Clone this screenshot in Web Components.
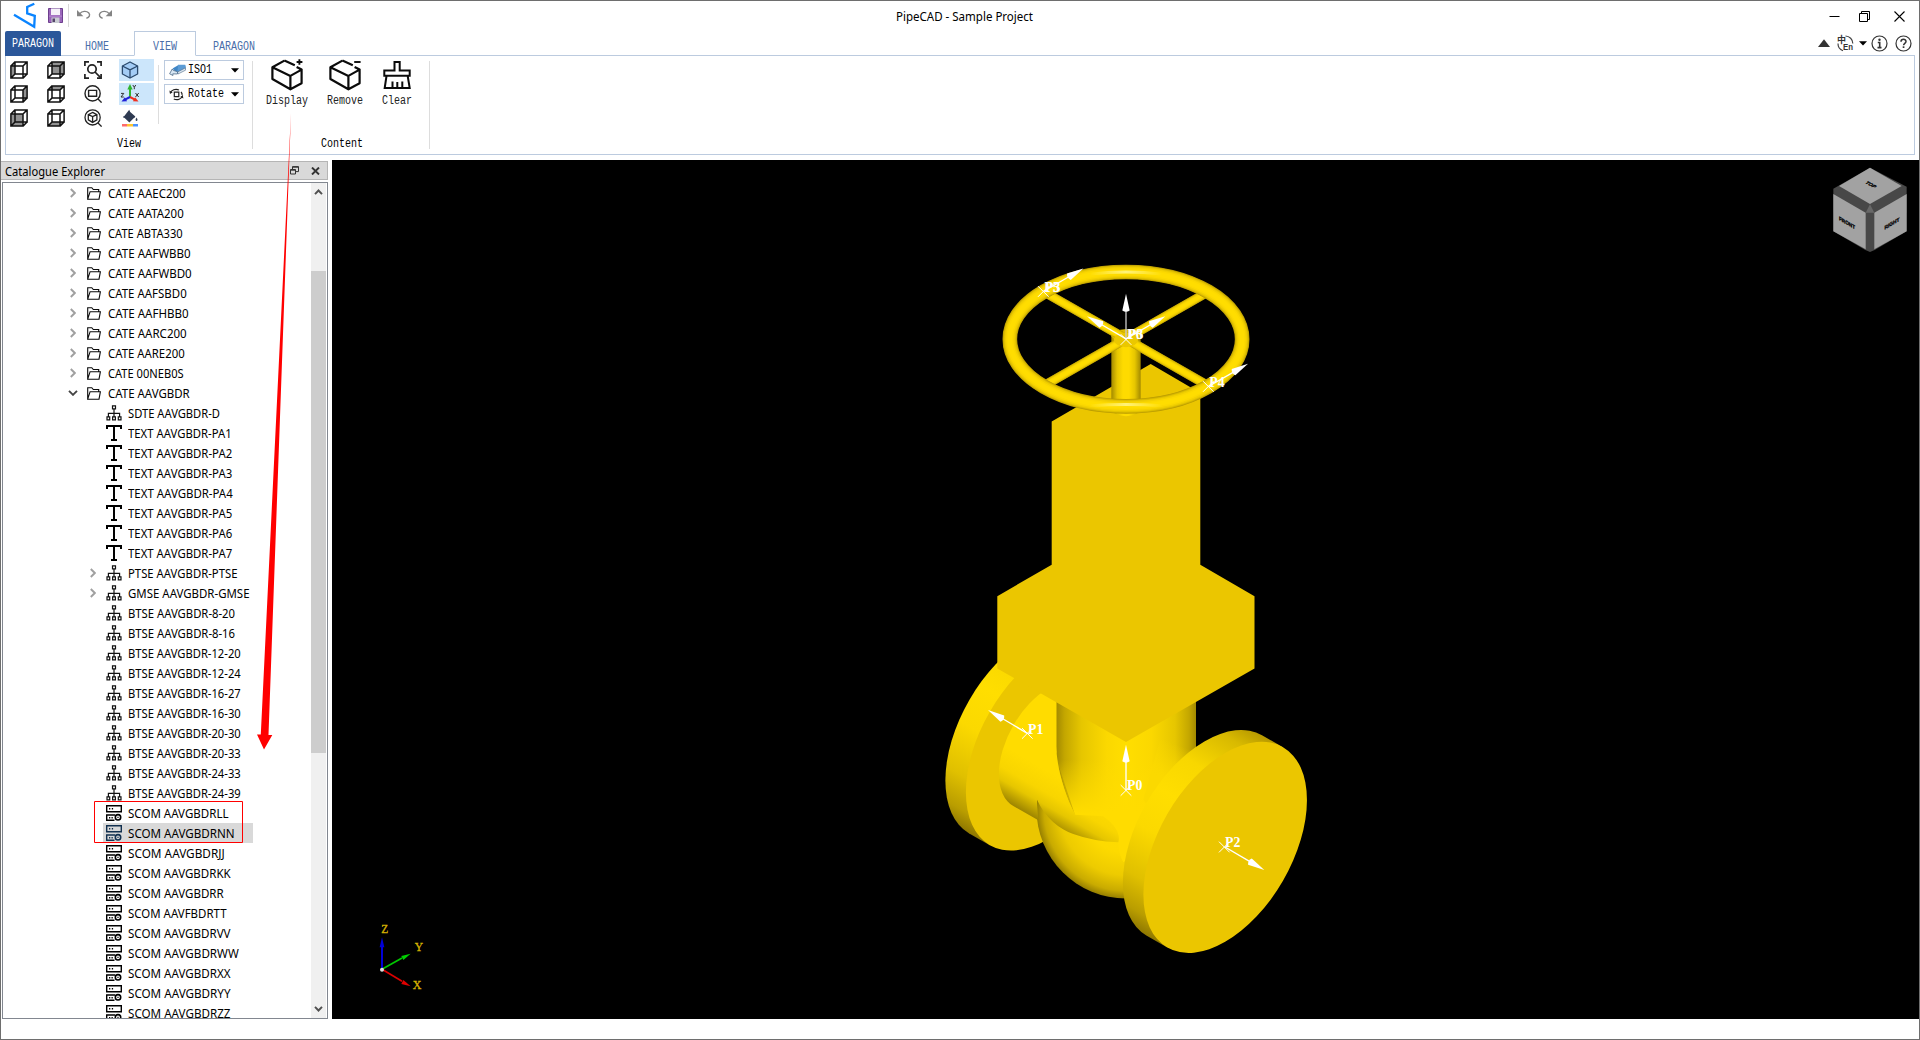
<!DOCTYPE html>
<html lang="en">
<head>
<meta charset="utf-8">
<title>PipeCAD - Sample Project</title>
<style>
html,body{margin:0;padding:0;background:#fff;overflow:hidden}
</style>
</head>
<body>
<pc-app>
  <pc-titlebar slot="title"><pc-text w="137">PipeCAD - Sample Project</pc-text></pc-titlebar>
  <pc-ribbon slot="ribbon"></pc-ribbon>
  <pc-explorer slot="dock"></pc-explorer>
  <pc-viewport slot="view"></pc-viewport>
  <pc-annotation slot="overlay"></pc-annotation>
</pc-app>
<script>
const BASE = '*{box-sizing:border-box}svg{display:block;flex:none}';
function define(name, css, html, init) {
  customElements.define(name, class extends HTMLElement {
    connectedCallback() {
      if (this.shadowRoot) return;
      const root = this.attachShadow({mode: 'open'});
      const body = typeof html === 'function' ? html(this) : html;
      root.innerHTML = `<style>${BASE}${css}</style>${body}`;
      if (init) init(this, root);
    }
  });
}

const cube = face => `<svg width="18" height="18" viewBox="0 0 18 18" fill="none" stroke="#111" stroke-width="1.5">
  ${face ? `<path d="${face}" fill="#929292" stroke="none"/>` : ''}
  <path d="M.9 5H13v12.1H.9zM5 .9h12.1V13H5zM.9 5 5 .9M13 5l4.1-4.1M.9 17.1 5 13M13 17.1l4.1-4.1" /></svg>`;
const box = sign => `<svg width="32" height="32" viewBox="0 0 32 32" fill="none" stroke="#0b0b0b" stroke-width="2.2" stroke-linejoin="round">
  <path d="M13.4 1.6 1.4 8.3V20l18 10.3 11.2-6.1V10.6M13.4 1.6l10.4 4.6M1.4 8.3l18 8.6 11.2-6.3-5-2.6M19.4 16.9v13.4"/>
  <path d="${sign}" stroke-width="1.9"/></svg>`;
const ICONS = {
  cubeLeft: cube('M1 5 5 1v12l-4 4z'),
  cubeRight: cube('M13 5l4-4v12l-4 4z'),
  cubeFront: cube('M1 5h12v12H1z'),
  cubeBack: cube('M5 1h12v12H5z'),
  cubeTop: cube('M1 5l4-4h12l-4 4z'),
  cubeBottom: cube('M1 17l4-4h12l-4 4z'),
  fit: `<svg width="18" height="18" viewBox="0 0 18 18" fill="none" stroke="#222" stroke-width="1.7"><path d="M.9 5V.9H5M13 .9h4.1V5M17.1 13v4.1H13M5 17.1H.9V13"/><circle cx="8" cy="8" r="4.2"/><path d="M11 11l5.6 5.6"/></svg>`,
  zoomRect: `<svg width="18" height="18" viewBox="0 0 18 18" fill="none" stroke="#222" stroke-width="1.4"><circle cx="8.6" cy="8.4" r="7.6"/><path d="M4.6 5.4h8v5.8h-8zM14 14l3.6 3.6"/></svg>`,
  zoomCube: `<svg width="18" height="18" viewBox="0 0 18 18" fill="none" stroke="#222" stroke-width="1.3"><circle cx="8.6" cy="8.4" r="7.6"/><path d="M8.6 3.4l4.3 2.2v5.2l-4.3 2.6-4.3-2.6V5.6zM4.3 5.6l4.3 2 4.3-2M8.6 7.6v5.8M14 14l3.6 3.6"/></svg>`,
  shaded: `<svg width="18" height="18" viewBox="0 0 18 18" fill="#a3ccf5" stroke="#2b4a6d" stroke-width="1.3" stroke-linejoin="round"><path d="M9 1l7.6 4v8L9 17l-7.6-4V5z"/><path d="M1.4 5L9 8.8 16.6 5M9 8.8V17" fill="none"/></svg>`,
  axes: `<svg width="20" height="20" viewBox="0 0 20 20"><path d="M10 13V4" stroke="#2fb52f" stroke-width="2"/><path d="M7.3 5.5 10 0l2.7 5.5z" fill="#2fb52f"/><path d="M10 13l5 2.6" stroke="#f03020" stroke-width="2"/><path d="M18.5 17.5l-5.6-.2 2.2-4z" fill="#f03020"/><path d="M10 13l-5 2.6" stroke="#2020d8" stroke-width="2"/><path d="M1.5 17.5l5.6-.2-2.2-4z" fill="#2020d8"/><path d="M12.8 1l1.5 2.2L15.8 1M14.3 3.2v2M15.5 9l3.2 4M18.7 9l-3.2 4M1 9.4h2.8L1 13h2.8" stroke="#333" fill="none" stroke-width="1"/></svg>`,
  paint: `<svg width="18" height="18" viewBox="0 0 18 18"><path d="M8.2.8l1 2.2 5.2 4.6-6 5.8L2.6 8z" fill="#2f3b52"/><path d="M2 8h12" stroke="#2f3b52"/><path d="M15.5 8.5c1.6 2.3 1 3.5 0 3.5s-1.4-1.2 0-3.5z" fill="#2f3b52"/><path d="M1 15h5v2.5H1z" fill="#ff6b6b"/><path d="M6 15h6v2.5H6z" fill="#ffc62e"/><path d="M12 15h5v2.5h-5z" fill="#4b93ff"/></svg>`,
  iso: `<svg width="17" height="12" viewBox="0 0 17 12"><path d="M3.500 4.500 9.500 1 16.500 1.5v3L8 9.500z" fill="#3f86c6"/><path d="M9 .8h7.2l.3 3L8.500 8" fill="#5b9bd5"/><path d="M8.500 8 16.500 3.800v2.400L9 10z" fill="#dbe6f0" stroke="#4d6a86" stroke-width=".6"/><path d="M.6 9.800 3.200 5l1 1.300 4.400 1.500-.2 2.200-4.600-.2.200 1.700z" fill="#d7e6f3" stroke="#4d6a86" stroke-width=".8"/></svg>`,
  rotate: `<svg width="15" height="13" viewBox="0 0 15 13" fill="none" stroke="#222" stroke-width="1.2"><path d="M5.3 4.2h4.500v4.500H5.300z"/><path d="M1.2 5.2C2.3 2 6.5.4 10 2M13.6 7.7c-1 3.3-5.300 5-8.800 3.300M12 4c1 1 1.300 2 1 3"/><path d="M.4 2.500l.6 3.300 2.700-1.400zM14.400 10.600l-.6-3.300-2.600 1.600z" fill="#222" stroke="none"/></svg>`,
  down: `<svg width="8" height="5" viewBox="0 0 8 5"><path d="M0 .3h8L4 4.500z" fill="#000"/></svg>`,
  display: box('M28.4.2v5.600M25.6 3h5.800'),
  remove: box('M25.2 3h6.400'),
  clear: `<svg width="28" height="28" viewBox="0 0 28 28" fill="none" stroke="#0b0b0b" stroke-width="2"><path d="M11.500 1h5.200v8.500h10v5.300H1.300V9.500h10.200zM3.500 15 1.700 27h25l-2-12M9.500 20.500V27M14.300 21v6M19.300 20.500V27"/></svg>`,
  logo: `<svg width="24" height="27" viewBox="0 0 24 27" fill="none" stroke="#0a84ff" stroke-width="2.3"><path d="M21.300 1.700 14.200 5v6.400l7.600 2.400-.6 11L1 12.800"/></svg>`,
  save: `<svg width="15" height="15" viewBox="0 0 15 15"><path d="M.5.5h14v14H.5z" fill="#9a66ba" stroke="#6d3f8e"/><path d="M3 .5h9V7H3z" fill="#f5f1f8"/><path d="M1 7.600h13v1H1z" fill="#b98bd2"/><path d="M3.500 9.500h8V15h-8z" fill="#c9ccd2"/><path d="M4.500 10.500H7V14H4.500z" fill="#54456a"/></svg>`,
  undo: `<svg width="14" height="9" viewBox="0 0 14 9"><path d="M0 0v6.300h6.400z" fill="#848484"/><path d="M2.800 3.600C5 1 9.500.6 11.600 2.800s.6 4.800-2.200 5.400" fill="none" stroke="#848484" stroke-width="1.4"/></svg>`,
  redo: `<svg width="14" height="9" viewBox="0 0 14 9"><path d="M14 0v6.300H7.600z" fill="#848484"/><path d="M11.200 3.600C9 1 4.500.6 2.400 2.800s-.6 4.800 2.200 5.400" fill="none" stroke="#848484" stroke-width="1.4"/></svg>`,
  min: `<svg width="11" height="11" viewBox="0 0 11 11"><path d="M.5 5.500h10" stroke="#000"/></svg>`,
  restore: `<svg width="11" height="11" viewBox="0 0 11 11" fill="none" stroke="#000"><path d="M.5 2.500h8v8h-8zM2.500 2.500v-2h8v8h-2"/></svg>`,
  close: `<svg width="11" height="11" viewBox="0 0 11 11"><path d="M.5.5l10 10M10.500.5l-10 10" stroke="#000" stroke-width="1.1"/></svg>`,
  collapse: `<svg width="12" height="8" viewBox="0 0 12 8"><path d="M0 8h12L6 .3z" fill="#333"/></svg>`,
  lang: `<svg width="17" height="17" viewBox="0 0 17 17" fill="none" stroke="#444" overflow="visible"><path d="M8.500 1a7.500 7.500 0 0 1 7.300 7.500M6 15.700A7.500 7.500 0 0 1 1 8.500" stroke-width="1.200"/><text x="0" y="7.500" font-family="Noto Sans CJK SC,sans-serif" font-size="9" font-weight="bold" fill="#333" stroke="none">中</text><text x="6" y="15.300" font-family="Liberation Sans" font-size="9" font-weight="bold" textLength="10" lengthAdjust="spacingAndGlyphs" fill="#333" stroke="none">En</text></svg>`,
  info: `<svg width="17" height="17" viewBox="0 0 17 17" fill="none" stroke="#333" stroke-width="1.2"><circle cx="8.500" cy="8.500" r="7.500"/><circle cx="8.500" cy="4.700" r="1.200" fill="#333" stroke="none"/><path d="M6.800 7.500h1.900v4.800M6.500 12.600h4" stroke-width="1.600"/></svg>`,
  help: `<svg width="17" height="17" viewBox="0 0 17 17" fill="none" stroke="#333" stroke-width="1.2"><circle cx="8.500" cy="8.500" r="7.500"/><path d="M6 6.700C6 3.500 11 3.500 11 6.500c0 1.800-2.400 1.900-2.400 3.700" stroke-width="1.500"/><path d="M7.700 11.300h1.700V13H7.700z" fill="#333" stroke="none"/></svg>`,
  dockFloat: `<svg width="9" height="9" viewBox="0 0 9 9" fill="none" stroke="#333" stroke-width="1"><path d="M.5 3.500h5v4.500h-5zM.5 4.200h5M2.500 3V.6h6v5H6M2.500 1.200h6"/></svg>`,
  dockClose: `<svg width="9" height="8" viewBox="0 0 9 8"><path d="M1 .5l7 7M8 .5l-7 7" stroke="#333" stroke-width="1.9"/></svg>`,
  folder: `<svg width="14" height="13" viewBox="0 0 14 13" fill="none" stroke="#0a0a0a" stroke-width="1.1"><path d="M.7 12.200V.7h4.100l1.500 1.800h5.400v2.200M.7 12.200l2.400-7.500h10.300l-1.400 7.500z"/></svg>`,
  tree: `<svg width="16" height="16" viewBox="0 0 16 16" fill="none" stroke="#111" stroke-width="1.2"><path d="M6.500.8h3v3h-3zM8 4v7.500M2.400 11.500V8.300h11.200v3.200M1 11.800h2.700v3H1zM6.600 11.800h2.800v3H6.600zM12.300 11.800H15v3h-2.700z"/></svg>`,
  text: `<svg width="16" height="16" viewBox="0 0 16 16" fill="none" stroke="#000" stroke-width="2"><path d="M1 4V1h14v3M8 1v14M5 15h6"/></svg>`,
  scom: `<svg width="16" height="16" viewBox="0 0 16 16" fill="none" stroke="currentColor" stroke-width="1.4"><path d="M.7.7h14.600v6H.7zM8.500 15.300H.7V10h8.500"/><path d="M3 3.700h1.300M5.800 3.700h1.300M3 12.700h1.300M5.500 12.700h1.300" stroke-width="1.400"/><circle cx="12" cy="12.300" r="2.700" stroke-width="1.600"/><path d="M11.400 12.300h1.200" stroke-width="1.200"/></svg>`,
  chevR: `<svg width="6" height="10" viewBox="0 0 6 10"><path d="M.8 1l4 4-4 4" fill="none" stroke="#a0a0a0" stroke-width="1.900"/></svg>`,
  chevD: `<svg width="10" height="6" viewBox="0 0 10 6"><path d="M1 .8l4 4 4-4" fill="none" stroke="#444" stroke-width="1.900"/></svg>`,
  sbUp: `<svg width="9" height="6" viewBox="0 0 9 6"><path d="M1 5.200l3.500-3.700L8 5.200" fill="none" stroke="#505050" stroke-width="1.900"/></svg>`,
  sbDown: `<svg width="9" height="6" viewBox="0 0 9 6"><path d="M1 .8l3.500 3.700L8 .8" fill="none" stroke="#505050" stroke-width="1.900"/></svg>`
};
define('pc-icon', ':host{display:block;flex:none}', el => ICONS[el.getAttribute('name')]);

define('pc-app', `
  :host{display:flex;flex-direction:column;position:relative;width:1920px;height:1040px;background:#fff;box-sizing:border-box;
    border:1px solid #6e6e6e;overflow:hidden;font:12px "Noto Sans","Open Sans",sans-serif;color:#000}
  main{display:flex;height:859px;gap:3px}
  `, `<slot name="title"></slot><slot name="ribbon"></slot>
  <main><slot name="dock"></slot><slot name="view"></slot></main><slot name="overlay"></slot>`);

define('pc-titlebar', `
  :host{display:grid;grid-template-columns:1fr auto 1fr;height:30px;align-items:start}
  .l{display:flex;align-items:flex-start;padding-left:12px}
  .l pc-icon:nth-child(1){margin-top:1px}
  .l pc-icon:nth-child(2){margin:7px 0 0 11px}
  .l i{width:1px;height:23px;margin:3px 8px 0 5px;background:#d8d8d8}
  .l pc-icon:nth-child(4){margin-top:9px}
  .l pc-icon:nth-child(5){margin:9px 0 0 7px}
  .c{padding:7px 0 0 9px;line-height:17px}
  .r{display:flex;justify-content:flex-end;padding:10px 14px 0 0}
  .r pc-icon+pc-icon{margin-left:19px}.r pc-icon:last-child{margin-left:24px}
  `, `<div class="l"><pc-icon name="logo"></pc-icon><pc-icon name="save"></pc-icon><i></i><pc-icon name="undo"></pc-icon><pc-icon name="redo"></pc-icon></div>
  <div class="c"><slot></slot></div>
  <div class="r"><pc-icon name="min"></pc-icon><pc-icon name="restore"></pc-icon><pc-icon name="close"></pc-icon></div>`);

define('pc-combo', `
  :host{display:flex;align-items:center;width:80px;height:20px;border:1px solid #bccbdf;padding:0 4px;background:#fff;box-sizing:border-box}
  .i{width:19px}.t{flex:1}`,
  el => `<div class="i"><pc-icon name="${el.getAttribute('icon')}"></pc-icon></div><div class="t"><slot></slot></div><pc-icon name="down"></pc-icon>`);

define('pc-bigbutton', `
  :host{display:flex;flex-direction:column;align-items:center;color:#222}
  .i{height:32px;display:flex;align-items:center}.t{line-height:14px;margin-top:3px}`,
  el => `<div class="i"><pc-icon name="${el.getAttribute('icon')}"></pc-icon></div><div class="t"><slot></slot></div>`);

define('pc-ribbon', `
  :host{display:flex;flex-direction:column;height:129px;padding:0 4px 0 4px;font:12px "Liberation Mono",monospace;box-sizing:border-box}
  nav{display:flex;height:25px;color:#4a6ea9}
  nav>div{display:flex;align-items:flex-end;justify-content:center;padding-bottom:1px;border-bottom:1px solid #bccbdf;line-height:14px}
  .file{width:56px;background:#2b579a;color:#fff;padding-bottom:4px!important;border-color:#2b579a!important;border-radius:2px 2px 0 0}
  .home{width:73px;padding-right:2px}
  .view{width:62px;border:1px solid #bccbdf;border-bottom-color:#fff!important}
  .par{width:76px}
  .rest{flex:1;justify-content:flex-end!important;gap:7px;padding-right:3px;align-items:center!important;padding-top:1px}
  .panel{display:flex;height:99px;border:1px solid #bccbdf;border-top:0}
  .g1{display:flex;flex-direction:column;width:247px}
  .row{display:flex;height:75px;padding:3px 0 0 4px}
  .grid{display:grid;grid-template-columns:37px 37px 35px 35px;grid-template-rows:repeat(3,24px);align-items:start}
  .grid>div{height:22px;display:flex;align-items:center}
  .on{background:#cce6fb}.grid>div:nth-child(4n){padding-left:2px}
  .grid>.ax{padding-left:1px!important}
  .vs{width:1px;height:59px;margin:6px 5px 0 4px;background:#ddd}
  .combos{display:flex;flex-direction:column;gap:4px;padding-top:1px}
  .cap{display:flex;line-height:14px;padding-top:6px}
  .sep{width:1px;height:88px;margin-top:5px;background:#ddd}
  .g2{width:176px;display:flex;flex-direction:column}
  .big{display:flex;height:75px;padding:3px 0 0 13px;gap:19px}`,
  `<nav><div class="file"><pc-text w="42">PARAGON</pc-text></div><div class="home"><pc-text w="24">HOME</pc-text></div>
   <div class="view"><pc-text w="24">VIEW</pc-text></div><div class="par"><pc-text w="42">PARAGON</pc-text></div>
   <div class="rest"><pc-icon name="collapse"></pc-icon><pc-icon name="lang"></pc-icon><pc-icon name="down" style="margin:0 -2px"></pc-icon><pc-icon name="info" style="margin-left:-1px"></pc-icon><pc-icon name="help"></pc-icon></div></nav>
   <div class="panel"><div class="g1"><div class="row"><div class="grid">
     <div><pc-icon name="cubeLeft"></pc-icon></div><div><pc-icon name="cubeBack"></pc-icon></div><div><pc-icon name="fit"></pc-icon></div><div class="on"><pc-icon name="shaded"></pc-icon></div>
     <div><pc-icon name="cubeRight"></pc-icon></div><div><pc-icon name="cubeTop"></pc-icon></div><div><pc-icon name="zoomRect"></pc-icon></div><div class="on ax"><pc-icon name="axes"></pc-icon></div>
     <div><pc-icon name="cubeFront"></pc-icon></div><div><pc-icon name="cubeBottom"></pc-icon></div><div><pc-icon name="zoomCube"></pc-icon></div><div><pc-icon name="paint"></pc-icon></div>
     </div><div class="vs"></div><div class="combos"><pc-combo icon="iso"><pc-text w="24">ISO1</pc-text></pc-combo><pc-combo icon="rotate"><pc-text w="36">Rotate</pc-text></pc-combo></div></div>
     <div class="cap" style="padding-left:111px"><pc-text w="24">View</pc-text></div></div>
   <div class="sep" style="margin-left:-1px"></div>
   <div class="g2"><div class="big"><pc-bigbutton icon="display"><pc-text w="42">Display</pc-text></pc-bigbutton><pc-bigbutton icon="remove"><pc-text w="36">Remove</pc-text></pc-bigbutton><pc-bigbutton icon="clear"><pc-text w="30">Clear</pc-text></pc-bigbutton></div>
     <div class="cap" style="padding-left:68px"><pc-text w="42">Content</pc-text></div></div>
   <div class="sep"></div></div>`);

const ROWS = [
  ['CATE AAEC200',77.7],['CATE AATA200',75.7],['CATE ABTA330',74.7],['CATE AAFWBB0',82.7],['CATE AAFWBD0',83.7],
  ['CATE AAFSBD0',78.7],['CATE AAFHBB0',80.7],['CATE AARC200',78.7],['CATE AARE200',76.7],['CATE 00NEB0S',75.7],
  ['CATE AAVGBDR',81.7],['SDTE AAVGBDR-D',92],
  ['TEXT AAVGBDR-PA1',103.7],['TEXT AAVGBDR-PA2',104.2],['TEXT AAVGBDR-PA3',104.2],['TEXT AAVGBDR-PA4',104.7],['TEXT AAVGBDR-PA5',104.2],['TEXT AAVGBDR-PA6',104.2],['TEXT AAVGBDR-PA7',104.2],
  ['PTSE AAVGBDR-PTSE',109.5],['GMSE AAVGBDR-GMSE',121.5],
  ['BTSE AAVGBDR-8-20',107],['BTSE AAVGBDR-8-16',107],['BTSE AAVGBDR-12-20',112.7],['BTSE AAVGBDR-12-24',112.7],['BTSE AAVGBDR-16-27',112.7],
  ['BTSE AAVGBDR-16-30',112.7],['BTSE AAVGBDR-20-30',112.7],['BTSE AAVGBDR-20-33',112.7],['BTSE AAVGBDR-24-33',112.7],['BTSE AAVGBDR-24-39',112.7],
  ['SCOM AAVGBDRLL',100.5],['SCOM AAVGBDRNN',106.7],['SCOM AAVGBDRJJ',96.7],['SCOM AAVGBDRKK',102.7],['SCOM AAVGBDRR',95.7],
  ['SCOM AAVFBDRTT',98.5],['SCOM AAVGBDRVV',102.5],['SCOM AAVGBDRWW',110.7],['SCOM AAVGBDRXX',102.5],['SCOM AAVGBDRYY',102.5],['SCOM AAVGBDRZZ',102.5]];
const KIND = {CATE:'folder', TEXT:'text', SCOM:'scom'};

define('pc-row', `
  :host{display:flex;height:20px;flex:none;padding-left:calc(60px + var(--lv,0)*20px)}
  .ch{width:19px;margin-right:1px;display:flex;align-items:center;justify-content:center}
  .it{display:flex;align-items:center;height:20px;padding-right:18px}
  :host([sel]) .it{background:#d9d9d9;--ic:#12304f}
  .ic{width:22px;display:flex;justify-content:center;color:var(--ic,#000)}
  .tx{padding:1px 0 0 3.3px;line-height:19px;height:20px}`,
  el => `<div class="ch">${el.getAttribute('chev') ? `<pc-icon name="${el.getAttribute('chev')}"></pc-icon>` : ''}</div>
  <div class="it"><div class="ic"><pc-icon name="${el.getAttribute('icon')}"></pc-icon></div><div class="tx"><slot></slot></div></div>`);

define('pc-explorer', `
  :host{display:flex;flex-direction:column;width:327px;height:859px;padding:1px 0 0 0;margin-right:1px;box-sizing:border-box}
  header{display:flex;height:19px;align-items:center;background:#d9d9d9;border:1px solid #b5b5b5;border-left:0;padding:0 7px 0 4px;line-height:17px}
  header pc-text{padding-top:1px}
  header pc-icon+pc-icon{margin-left:12px}
  .box{display:flex;margin:2px 0 0 1px;height:837px;border:1px solid #828790}
  .list{flex:1;overflow:hidden;display:flex;flex-direction:column}
  .sb{width:15px;margin-right:1px;display:flex;flex-direction:column;align-items:center;background:#f0f0f0;padding:6px 0}
  .thumb{width:15px;height:482px;margin-top:76px;background:#cdcdcd}
  .sp{flex:1}`,
  () => `<header><pc-text w="100">Catalogue Explorer</pc-text><span style="flex:1"></span><pc-icon name="dockFloat"></pc-icon><pc-icon name="dockClose"></pc-icon></header>
  <div class="box"><div class="list">${ROWS.map(([t, w], i) => {
    const k = t.slice(0, 4), lv = i > 10 ? 1 : 0;
    const chev = i < 10 || i === 19 || i === 20 ? 'chevR' : i === 10 ? 'chevD' : '';
    return `<pc-row style="--lv:${lv}" icon="${KIND[k] || 'tree'}" chev="${chev}" ${i === 32 ? 'sel' : ''}><pc-text w="${w}">${t}</pc-text></pc-row>`;
  }).join('')}</div><div class="sb"><pc-icon name="sbUp"></pc-icon><div class="thumb"></div><div class="sp"></div><pc-icon name="sbDown"></pc-icon></div></div>`);

/* Direction arrow with cone head; units are thirds of a pixel */
function arrow(x, y, tx, ty, line = '#fff') {
  const L = Math.hypot(tx - x, ty - y), ux = (tx - x) / L, uy = (ty - y) / L;
  const bx = tx - ux * 50, by = ty - uy * 50, h = 11;
  return `<path d="M${x} ${y}L${bx} ${by}" stroke="${line}" stroke-width="4"/>
  <path d="M${tx} ${ty}L${bx - uy * h} ${by + ux * h}Q${bx - ux * 8} ${by - uy * 8} ${bx + uy * h} ${by - ux * h}z" fill="#fff"/>`;
}
const cross = (x, y) => `<path d="M${x - 16} ${y - 16}l32 32M${x + 16} ${y - 16}l-32 32" stroke="#fff" stroke-width="3"/>`;
const label = (x, y, t) => `<text x="${x}" y="${y}" font-family="Liberation Serif" font-weight="bold" font-size="46" fill="#fff" textLength="46" lengthAdjust="spacingAndGlyphs">${t}</text>`;
const disc = (cx, cy, id) => `
  <path fill="url(#${id})" d="M${cx + 173.5} ${cy - 300.5}L${cx + 110.5} ${cy - 336.5}A347 200 -60 0 0 ${cx - 236.5} ${cy + 264.5}L${cx - 173.5} ${cy + 300.5}z"/>
  <ellipse cx="${cx}" cy="${cy}" rx="347" ry="200.3" transform="rotate(-60 ${cx} ${cy})" fill="#ebc600"/>`;
const rimGrad = (id, cx, cy) => `<linearGradient id="${id}" gradientUnits="userSpaceOnUse" x1="${cx + 173}" y1="${cy - 300}" x2="${cx - 173}" y2="${cy + 300}">
  <stop offset="0" stop-color="#b89a00"/><stop offset=".08" stop-color="#d8b900"/><stop offset=".25" stop-color="#f8d700"/><stop offset=".42" stop-color="#ffde00"/><stop offset=".6" stop-color="#fbd900"/><stop offset=".8" stop-color="#e0c000"/><stop offset=".93" stop-color="#b99d00"/><stop offset="1" stop-color="#8f7800"/></linearGradient>`;

function tube(w) {
  const steps = [['#b79900', 1], ['#cfb000', .93], ['#e3c300', .82], ['#f2d000', .68], ['#fcd900', .5], ['#ffdd00', .3]];
  return steps.map(([c, k]) => [c, w * k]);
}
const spokes = tube(28).map(([c, w]) => `<path d="M195 158 681 436M681 158 195 436" stroke="${c}" stroke-width="${w}"/>`).join('');
const ring = tube(44).map(([c, w]) => `<ellipse cx="438" cy="298" rx="348.500" ry="201.500" stroke="${c}" stroke-width="${w}"/>`).join('');

define('pc-viewport', ':host{display:block;flex:1;height:859px;background:#000;overflow:hidden}', () => `
<svg width="1587" height="859" viewBox="332 160 1587 859">
<defs>
 ${rimGrad('rimL', 353, 316)}${rimGrad('rimR', 885.5, 623)}
 <linearGradient id="neck" gradientUnits="userSpaceOnUse" x1="460" y1="135" x2="250" y2="499">
  <stop offset="0" stop-color="#d0b000"/><stop offset=".2" stop-color="#ffdc00"/><stop offset=".66" stop-color="#ffdc00"/><stop offset=".8" stop-color="#f8d500"/><stop offset=".88" stop-color="#e6c600"/><stop offset="1" stop-color="#9c8400"/></linearGradient>
 <linearGradient id="vert" gradientUnits="userSpaceOnUse" x1="379" y1="0" x2="798" y2="0">
  <stop offset="0" stop-color="#a38a00"/><stop offset=".06" stop-color="#c4a700"/><stop offset=".18" stop-color="#e6c600"/><stop offset=".36" stop-color="#fbd800"/><stop offset=".5" stop-color="#ffde00"/><stop offset=".68" stop-color="#fbd800"/><stop offset=".85" stop-color="#e6c600"/><stop offset=".95" stop-color="#c4a700"/><stop offset="1" stop-color="#a38a00"/></linearGradient>
 <linearGradient id="blend" gradientUnits="userSpaceOnUse" x1="560" y1="360" x2="560" y2="520"><stop offset="0" stop-color="#ffdc00" stop-opacity="0"/><stop offset="1" stop-color="#ffdc00"/></linearGradient>
 <linearGradient id="blendR" gradientUnits="userSpaceOnUse" x1="730" y1="310" x2="690" y2="410"><stop offset="0" stop-color="#fbd900" stop-opacity="0"/><stop offset="1" stop-color="#fbd900"/></linearGradient>
 <radialGradient id="ball" gradientUnits="userSpaceOnUse" cx="588" cy="508" r="268" fx="590" fy="500">
  <stop offset="0" stop-color="#ffde00"/><stop offset=".5" stop-color="#fdda00"/><stop offset=".75" stop-color="#edcb00"/><stop offset=".92" stop-color="#c9ab00"/><stop offset="1" stop-color="#978000"/></radialGradient>
 <linearGradient id="stem" gradientUnits="userSpaceOnUse" x1="394" y1="0" x2="482" y2="0">
  <stop offset="0" stop-color="#a38a00"/><stop offset=".2" stop-color="#e6c600"/><stop offset=".4" stop-color="#fedb00"/><stop offset=".6" stop-color="#fedb00"/><stop offset=".8" stop-color="#e6c600"/><stop offset="1" stop-color="#a38a00"/></linearGradient>
 <linearGradient id="shine" gradientUnits="userSpaceOnUse" x1="330" y1="0" x2="546" y2="0"><stop offset="0" stop-color="#fff27a" stop-opacity="0"/><stop offset=".5" stop-color="#fff27a"/><stop offset="1" stop-color="#fff27a" stop-opacity="0"/></linearGradient>
</defs>
<g transform="translate(930 639.700) scale(.33333)">
 ${disc(353, 316, 'rimL')}
 <circle cx="588" cy="508" r="268.500" fill="url(#ball)"/>
 <path d="M379 150V320C380 380 400 455 435 525L565 608Q566 640 580 668L700 560 798 400V150z" fill="url(#vert)"/>
 <path d="M380 360 435 525 565 608Q566 640 580 668L700 560V360z" fill="url(#blend)"/>
 <path d="M798 300V420L700 560 640 480 690 300z" fill="url(#blendR)"/>
 <path d="M460 135A210 121 -60 0 0 250 499L325 542 320 478C345 535 390 570 430 583Q490 605 565 608Q575 570 520 530L435 525C400 455 380 380 379 320V135z" fill="url(#neck)"/>
 ${disc(885.5, 623, 'rimR')}
</g>
<path d="M1051.700 421.500 1150.700 364.100 1200.300 393V564.700L1254.500 596.200V668.500L1126 742.100 997.300 668.500V596.200L1051.700 564.700z" fill="#ebc600"/>
<g transform="translate(930 639.700) scale(.33333)">
 ${arrow(292, 281, 174, 211)}${cross(292, 281)}${label(294, 282, 'P1')}
 ${arrow(588, 452, 588, 315)}${cross(588, 452)}${label(591, 452, 'P0')}
 ${arrow(885, 622, 1003, 691)}${cross(883, 622)}${label(885, 623, 'P2')}
</g>
<g transform="translate(980 239.800) scale(.33333)" fill="none">
 <path d="M394 290A44 22 0 0 1 482 290V505A44 24 0 0 1 394 505z" fill="url(#stem)"/>
 <path d="M394 290A44 20 0 0 1 482 290L470 300H406z" fill="#e0bd00"/>
 ${spokes}
 <ellipse cx="438" cy="300" rx="36" ry="22" fill="#ebc800"/>
 ${ring}
 <path d="M330 103Q438 90 546 103M330 498Q438 490 546 498" stroke="url(#shine)" stroke-width="9"/>
 ${arrow(438, 297, 438, 162, '#c8c8c8')}${arrow(438, 297, 321, 229)}${arrow(438, 297, 556, 229)}${cross(438, 299)}
 ${label(442, 299, 'P6')}${label(444, 299, 'P3')}
 ${arrow(190, 155, 310, 86)}${cross(190, 155)}${label(193, 156, 'P5')}${label(195, 156, 'P3')}
 ${arrow(685, 440, 804, 372)}${cross(685, 440)}${label(688, 441, 'P4')}
</g>
<g transform="translate(360 900) scale(.33333)">
 <path d="M66 208V138" stroke="#0000d8" stroke-width="6"/><path d="M66 112l-7 30h14z" fill="#0000d8"/>
 <path d="M66 208l60-34" stroke="#00c800" stroke-width="5"/><path d="M152 161l-28 7 6 12z" fill="#00d000"/>
 <path d="M66 208l60 36" stroke="#dc0000" stroke-width="5"/><path d="M152 259l-28-7 6-12z" fill="#e00000"/>
 <circle cx="66" cy="209" r="6" fill="#ddd"/>
 <g font-family="Liberation Serif" font-size="40" fill="#d8b400" stroke="#d8b400"><text x="64" y="98" textLength="21" lengthAdjust="spacingAndGlyphs">Z</text><text x="164" y="153" textLength="25" lengthAdjust="spacingAndGlyphs">Y</text><text x="158" y="267" textLength="26" lengthAdjust="spacingAndGlyphs">X</text></g>
</g>
<g transform="translate(1780 0) scale(.33333)">
 <path d="M270 503 380 560V694L284 750 270 756 256 750 160 694V566z" fill="#484848"/>
 <path d="M270 503 365 558 270 612 177 558z" fill="#a2a2a2"/>
 <path d="M160 582 257 638V748L160 694z" fill="#a2a2a2"/><path d="M283 638 380 582V694L283 748z" fill="#a2a2a2"/>
 <path d="M270 613 257 638H283z" fill="#686868"/>
 <g font-family="Liberation Sans" font-weight="bold" font-size="16" fill="#000" stroke="#000" text-anchor="middle">
  <text transform="matrix(.866 .5 -.866 .5 268 557)" textLength="31" lengthAdjust="spacingAndGlyphs">TOP</text>
  <text transform="matrix(.866 .5 0 1 201 674)" textLength="56" lengthAdjust="spacingAndGlyphs">FRONT</text>
  <text transform="matrix(.866 -.5 0 1 336 676)" textLength="52" lengthAdjust="spacingAndGlyphs">RIGHT</text></g>
</g>
</svg>`);

/* Red call-out arrow and frame drawn over the window */
define('pc-annotation', ':host{position:absolute;left:-1px;top:-1px;pointer-events:none}', `
<svg width="400" height="900" viewBox="0 0 400 900"><path d="M291 113 268.500 735H272.300L264 749.500 257 734.500H260.800z" fill="#f00"/>
<path d="M94.500 801.500h148v41h-148z" fill="none" stroke="#f00"/></svg>`);

/* Text run condensed or stretched to fill a given width; registered last so
   that the fonts set by the surrounding elements already apply when it measures */
define('pc-text', ':host{display:inline-block;white-space:pre}span{display:inline-block;transform-origin:0 50%}',
  '<span><slot></slot></span>', (el, root) => {
    const w = parseFloat(el.getAttribute('w'));
    if (!w) return;
    const s = root.querySelector('span');
    s.style.transform = `scaleX(${w / s.getBoundingClientRect().width})`;
    el.style.width = w + 'px';
  });
</script>
</body>
</html>
